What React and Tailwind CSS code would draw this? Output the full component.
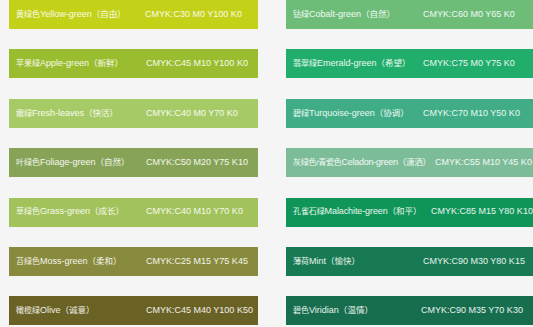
import React from 'react';

const leftColors = [
  { cn: '黄绿色', en: 'Yellow-green', mood: '自由', cmyk: 'CMYK:C30 M0 Y100 K0', bg: 'bg-[#c3d118]', w: 'w-[129px]' },
  { cn: '苹果绿', en: 'Apple-green', mood: '新鲜', cmyk: 'CMYK:C45 M10 Y100 K0', bg: 'bg-[#9abd2f]', w: 'w-[130px]' },
  { cn: '嫩绿', en: 'Fresh-leaves', mood: '快活', cmyk: 'CMYK:C40 M0 Y70 K0', bg: 'bg-[#a6cb66]', w: 'w-[130px]' },
  { cn: '叶绿色', en: 'Foliage-green', mood: '自然', cmyk: 'CMYK:C50 M20 Y75 K10', bg: 'bg-[#87a357]', w: 'w-[130px]' },
  { cn: '草绿色', en: 'Grass-green', mood: '成长', cmyk: 'CMYK:C40 M10 Y70 K0', bg: 'bg-[#a2c25c]', w: 'w-[130px]' },
  { cn: '苔绿色', en: 'Moss-green', mood: '柔和', cmyk: 'CMYK:C25 M15 Y75 K45', bg: 'bg-[#888a3d]', w: 'w-[130px]' },
  { cn: '橄榄绿', en: 'Olive', mood: '诚意', cmyk: 'CMYK:C45 M40 Y100 K50', bg: 'bg-[#6a6125]', w: 'w-[130px]' },
];

const rightColors = [
  { cn: '钴绿', en: 'Cobalt-green', mood: '自然', cmyk: 'CMYK:C60 M0 Y65 K0', bg: 'bg-[#6dbd79]', w: 'w-[130px]' },
  { cn: '翡翠绿', en: 'Emerald-green', mood: '希望', cmyk: 'CMYK:C75 M0 Y75 K0', bg: 'bg-[#21ad6b]', w: 'w-[130px]' },
  { cn: '碧绿', en: 'Turquoise-green', mood: '协调', cmyk: 'CMYK:C70 M10 Y50 K0', bg: 'bg-[#40ad87]', w: 'w-[130px]' },
  { cn: '灰绿色/青瓷色', en: 'Celadon-green', mood: '潇洒', cmyk: 'CMYK:C55 M10 Y45 K0', bg: 'bg-[#7dbc98]', w: 'w-[142px] tracking-[-0.25px]' },
  { cn: '孔雀石绿', en: 'Malachite-green', mood: '和平', cmyk: 'CMYK:C85 M15 Y80 K10', bg: 'bg-[#109558]', w: 'w-[138px] tracking-[-0.1px]' },
  { cn: '薄荷', en: 'Mint', mood: '愉快', cmyk: 'CMYK:C90 M30 Y80 K15', bg: 'bg-[#177a52]', w: 'w-[130px]' },
  { cn: '碧色', en: 'Viridian', mood: '温情', cmyk: 'CMYK:C90 M35 Y70 K30', bg: 'bg-[#176e4e]', w: 'w-[128px]' },
];

function Swatch({ item }) {
  return (
    <div className={`${item.bg} h-[29px] flex items-center pl-[7px] text-[9px] text-white/90 whitespace-nowrap overflow-hidden`}>
      <span className={`${item.w} shrink-0`}>
        <span className="text-[8px]">{item.cn}</span>
        {item.en}
        <span className="text-[8.5px]">（{item.mood}）</span>
      </span>
      <span>{item.cmyk}</span>
    </div>
  );
}

export default function App() {
  return (
    <div
      className="w-[533px] h-[327px] bg-[#f5f5f5] overflow-hidden flex pl-[9px] gap-[28px]"
      style={{ fontFamily: '"Liberation Sans", "Noto Sans CJK SC", sans-serif' }}
    >
      <div className="w-[249px] shrink-0 flex flex-col gap-[20.4px]">
        {leftColors.map((c) => (
          <Swatch key={c.en} item={c} />
        ))}
      </div>
      <div className="w-[260px] shrink-0 flex flex-col gap-[20.4px]">
        {rightColors.map((c) => (
          <Swatch key={c.en} item={c} />
        ))}
      </div>
    </div>
  );
}
